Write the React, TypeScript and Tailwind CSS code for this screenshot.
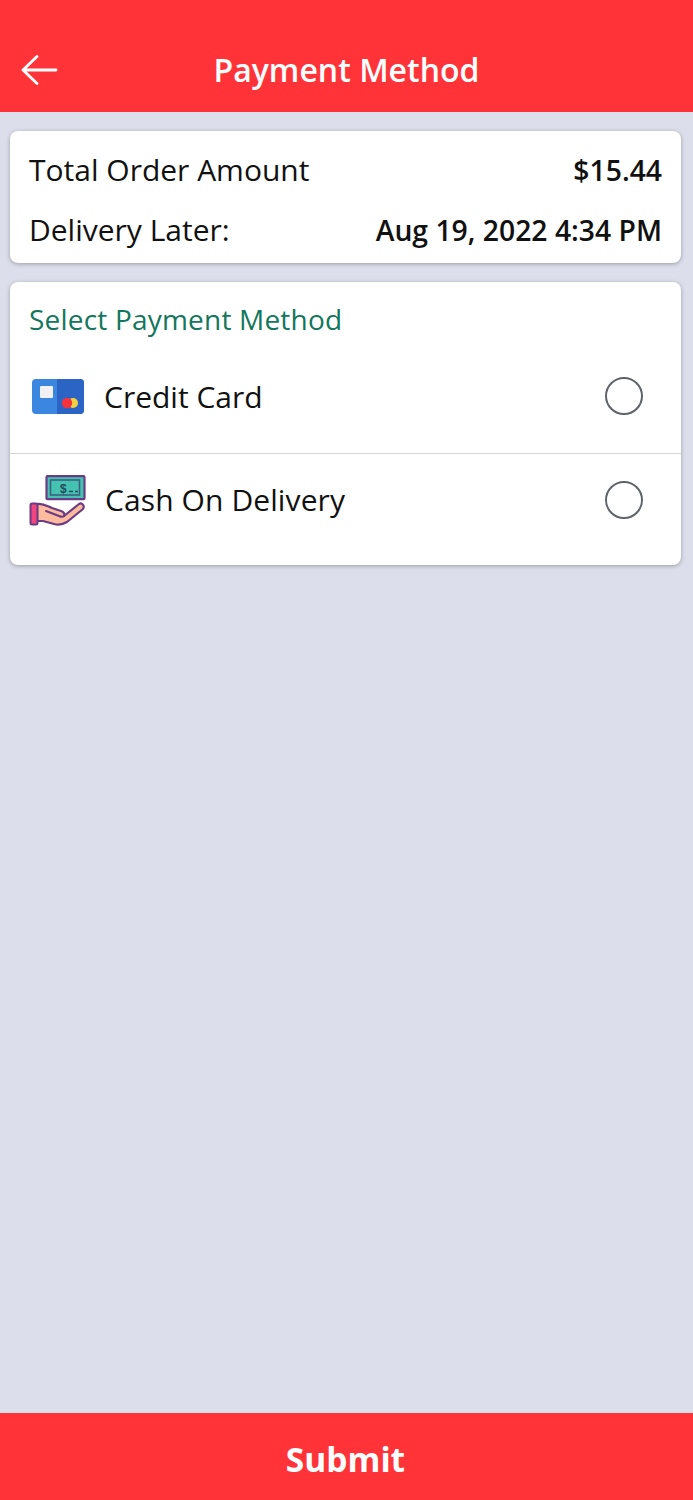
function CardIcon() {
  return (
    <svg width="52" height="35" viewBox="0 0 52 35">
      <rect x="0" y="0" width="52" height="35" rx="4" fill="#3b86de" />
      <path d="M25 0h23a4 4 0 0 1 4 4v27a4 4 0 0 1-4 4H25z" fill="#2b64c4" />
      <rect x="8" y="7" width="13" height="12" rx="1" fill="#f1f1f3" />
      <circle cx="41" cy="24" r="5" fill="#f5d13c" />
      <circle cx="35" cy="24" r="5.2" fill="#f7323f" />
    </svg>
  );
}

function CashIcon() {
  return (
    <svg width="57" height="51" viewBox="0 0 57 51" fill="none">
      <rect x="17.5" y="1.2" width="38" height="23" rx="1" fill="#45c3b2" stroke="#6c3b86" strokeWidth="2.2" />
      <rect x="21.5" y="5" width="29" height="15" fill="#45c3b2" stroke="#3f5f7e" strokeWidth="1.6" />
      <text x="31" y="17.5" fontSize="12" fontWeight="700" fill="#264a5c" fontFamily="Liberation Sans">$</text>
      <path d="M40 16.5h4M46 16.5h3" stroke="#264a5c" strokeWidth="1.6" />
      <path d="M8 29C14 28 18 31 23 33L32 36C35 37 36 39 35 41L50 29C53 27 56 31 54 34L38 47C33 50 29 50 25 49L14 46H8Z" fill="#fbbb9c" stroke="#6c3b86" strokeWidth="2.2" strokeLinejoin="round" />
      <path d="M17 36L30 41C32 42 34 42 35 41" stroke="#6c3b86" strokeWidth="2" strokeLinecap="round" />
      <rect x="1.5" y="28.5" width="7" height="21" rx="1.5" fill="#f0457f" stroke="#6c3b86" strokeWidth="2" />
    </svg>
  );
}

function Radio() {
  return <div className="h-[38px] w-[38px] rounded-full border-[2.5px] border-[#5f6368]" />;
}

export default function App() {
  return (
    <div className="flex h-[1500px] flex-col bg-[#dcdeeb] font-['Open_Sans',sans-serif]">
      <header className="flex h-[112px] items-center bg-[#ff3338] pl-[21px] pr-[21px] pt-[28px] text-white">
        <svg width="37" height="30" viewBox="0 0 37 30" fill="none" stroke="white" strokeWidth="2.8" strokeLinecap="round" strokeLinejoin="round">
          <path d="M35 15H2M16 1.5L2 15l14 13.5" />
        </svg>
        <h1 className="flex-1 pr-[37px] text-center text-[32px] font-semibold leading-none">Payment Method</h1>
      </header>

      <main className="flex flex-1 flex-col gap-[19px] pl-[10px] pr-[12px] pt-[19px]">
        <section className="rounded-lg bg-white px-[19px] pb-[13px] pt-[19px] text-[30px] leading-[40px] text-[#111] shadow-[0_1px_4px_rgba(0,0,0,0.3)]">
          <div className="flex items-center justify-between">
            <span>Total Order Amount</span>
            <span className="text-[28.3px] font-semibold">$15.44</span>
          </div>
          <div className="mt-[20px] flex items-center justify-between">
            <span>Delivery Later:</span>
            <span className="text-[28.3px] font-semibold">Aug 19, 2022 4:34 PM</span>
          </div>
        </section>

        <section className="rounded-lg bg-white pb-[19px] shadow-[0_1px_4px_rgba(0,0,0,0.3)]">
          <h2 className="px-[19px] pt-[17px] text-[28px] leading-[40px] tracking-[0.2px] text-[#12775c]">Select Payment Method</h2>
          <div className="flex h-[115px] items-center border-b border-[#d5d5d8] pl-[22px] pr-[38px]">
            <CardIcon />
            <span className="ml-[20px] flex-1 text-[30px] text-[#111]">Credit Card</span>
            <Radio />
          </div>
          <div className="flex h-[92px] items-center pl-[19px] pr-[38px]">
            <CashIcon />
            <span className="mb-[2px] ml-[19px] flex-1 text-[30px] tracking-[0.1px] text-[#111]">Cash On Delivery</span>
            <Radio />
          </div>
        </section>
      </main>

      <button className="h-[87px] bg-[#ff3338] pr-[2px] pt-[6px] text-[33.5px] font-bold text-white">Submit</button>
    </div>
  );
}
